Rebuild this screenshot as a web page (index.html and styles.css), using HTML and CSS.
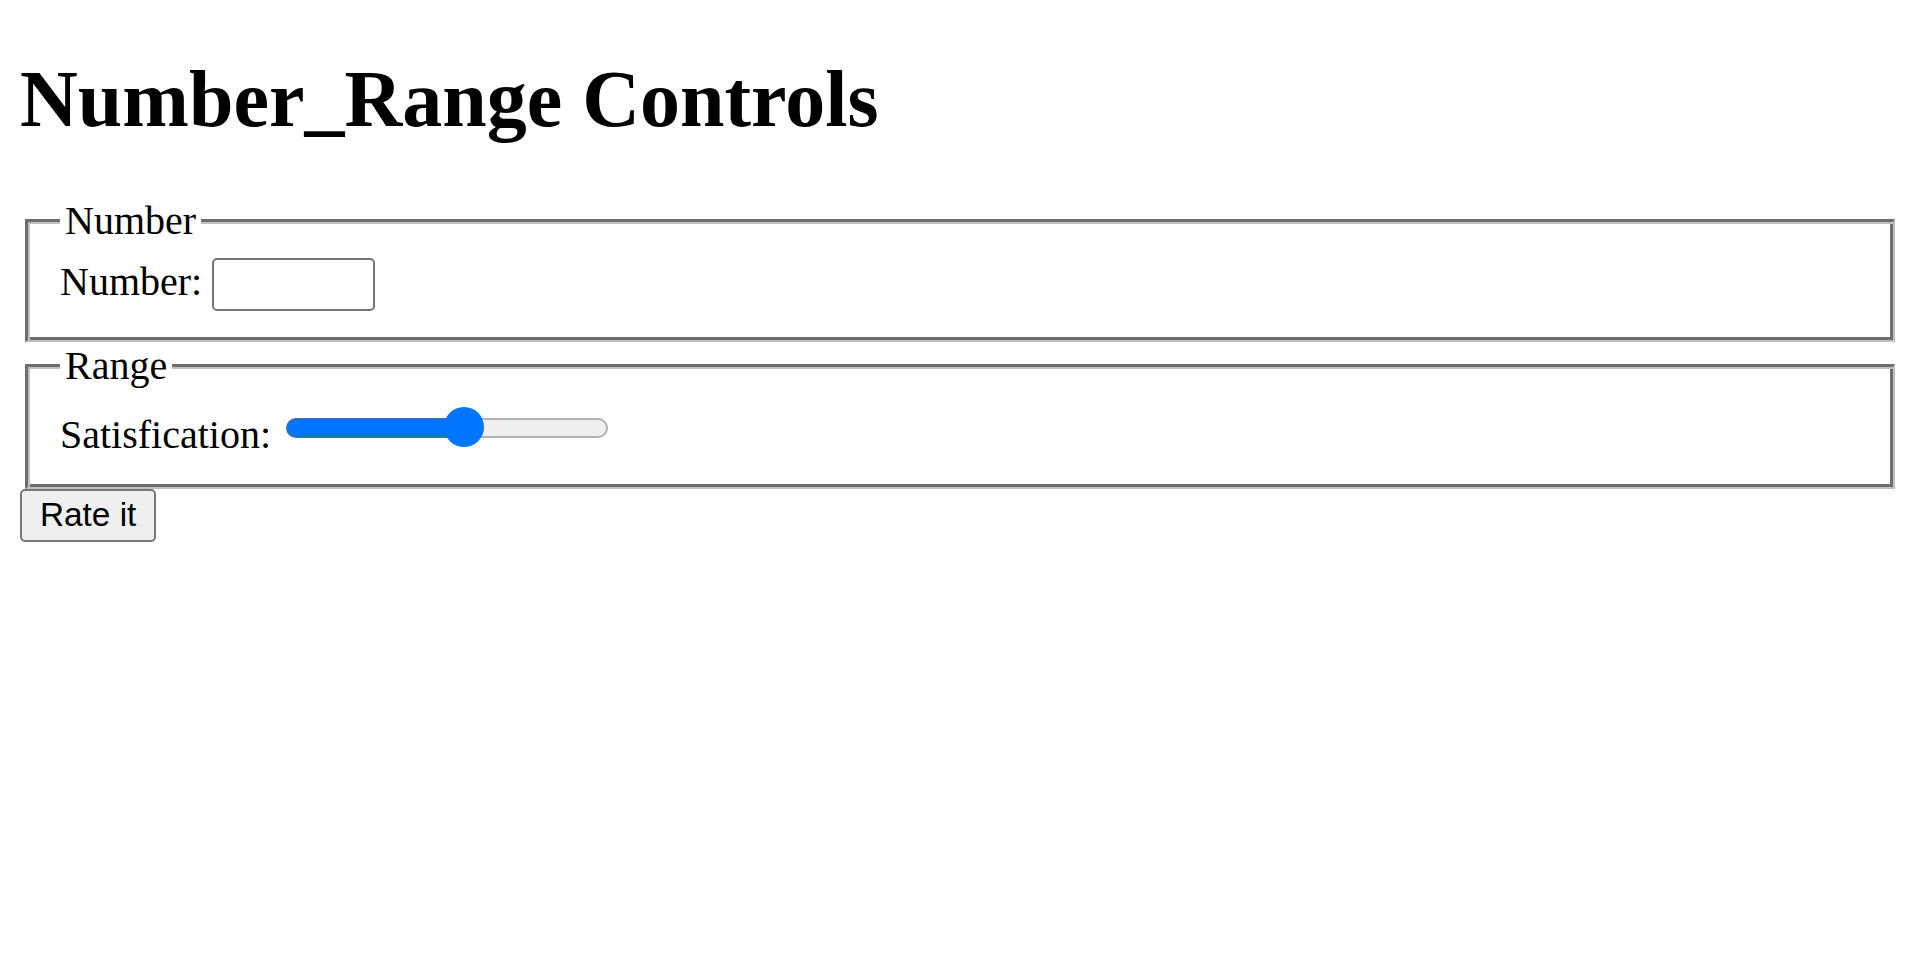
FILE: index.html
```html
<!DOCTYPE html>
<html lang="en">
<head>
<meta charset="utf-8">
<title>Number_Range Controls</title>
<link rel="stylesheet" href="styles.css">
</head>
<body>
<h1 class="title">Number_Range Controls</h1>
<form class="form">
  <fieldset class="group">
    <legend class="group-legend">Number</legend>
    <label class="field-label" for="num">Number:</label> <input class="num-input" id="num" type="number" min="0" max="10">
  </fieldset>
  <fieldset class="group">
    <legend class="group-legend">Range</legend>
    <label class="field-label" for="sat">Satisfication:</label> <input class="range-input" id="sat" type="range" min="0" max="100" value="56">
  </fieldset>
  <button class="submit-btn" type="submit">Rate it</button>
</form>
</body>
</html>
```

FILE: styles.css
```css
html, body {
  background: #ffffff;
}
body {
  margin: 0 20px 20px;
  font-family: "Liberation Serif", "Times New Roman", serif;
  font-size: 40px;
  color: #000000;
}
.title {
  font-size: 80px;
  font-weight: bold;
  margin: 0 0 52.6px;
  padding-top: 53.6px;
  line-height: normal;
}
.form {
  margin: 0;
}
.group {
  margin: 0 5px;
  padding: 14px 33px 29px 32px;
  border-style: solid;
  border-width: 3px 2px 2px 3px;
  border-color: #6e6e6e #c0c0c0 #c0c0c0 #6e6e6e;
  box-shadow: inset 2px 2px 0 #c0c0c0, inset -3px -3px 0 #6e6e6e;
  min-width: 0;
}
.group-legend {
  padding: 0 5px;
  font-size: 40px;
  background: #ffffff;
}
.field-label {
  font-size: 40px;
}
.num-input {
  box-sizing: border-box;
  width: 163px;
  height: 52.5px;
  margin: 0;
  padding: 2.5px 5px;
  border: 2.5px solid #767676;
  border-radius: 5px;
  font-family: "Liberation Sans", Arial, sans-serif;
  font-size: 33.33px;
  background: #ffffff;
  vertical-align: baseline;
  -moz-appearance: textfield;
}
.num-input::-webkit-inner-spin-button,
.num-input::-webkit-outer-spin-button {
  -webkit-appearance: none;
  margin: 0;
}
.range-input {
  -webkit-appearance: none;
  appearance: none;
  width: 322px;
  height: 40px;
  margin: 5px;
  padding: 0;
  background: transparent;
  vertical-align: baseline;
}
.range-input::-webkit-slider-runnable-track {
  box-sizing: border-box;
  height: 20px;
  border: 2.5px solid transparent;
  border-radius: 10px;
  background:
    linear-gradient(to right, #0075ff 0 56%, #efefef 56% 100%) padding-box,
    linear-gradient(to right, #2f6fb5 0 56%, #b2b2b2 56% 100%) border-box;
}
.range-input::-webkit-slider-thumb {
  -webkit-appearance: none;
  appearance: none;
  width: 40px;
  height: 40px;
  margin-top: -12.5px;
  border: none;
  border-radius: 50%;
  background: #0075ff;
}
.submit-btn {
  box-sizing: border-box;
  margin: 0;
  height: 53px;
  padding: 2.5px 18px;
  border: 2.5px solid #767676;
  border-radius: 5px;
  background: #efefef;
  color: #000000;
  font-family: "Liberation Sans", Arial, sans-serif;
  font-size: 33.33px;
}
```
